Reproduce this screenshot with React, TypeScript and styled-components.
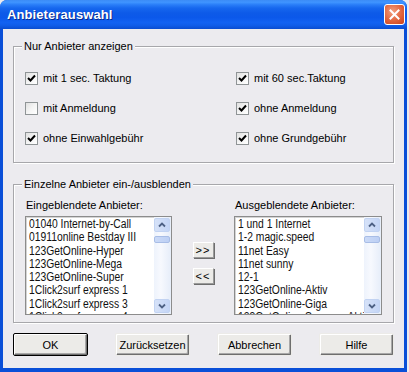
import React from "react";
import styled, { createGlobalStyle } from "styled-components";

const Global = createGlobalStyle`
  html, body { margin: 0; padding: 0; background: #ecebef; }
  body { font-family: "Liberation Sans", Arial, sans-serif; font-size: 11px; color: #000; }
`;

const Window = styled.div`
  width: 407px;
  height: 372px;
  box-sizing: border-box;
  display: flex;
  flex-direction: column;
  background: #0a4fd8;
  border-radius: 7px 7px 0 0;
  overflow: hidden;
`;

const TitleBar = styled.div`
  height: 29px;
  flex: none;
  display: flex;
  align-items: center;
  justify-content: space-between;
  padding: 0 2px 0 7px;
  background: linear-gradient(to bottom, #3c8cf6 0%, #3f94ff 8%, #2a7ef8 16%, #1667ee 28%, #0d5ae8 45%, #0b58ea 60%, #1262f2 78%, #0f5ce8 88%, #0a4cd0 100%);
`;

const Title = styled.span`
  font-family: "Liberation Sans", Arial, sans-serif;
  font-weight: bold;
  font-size: 13px;
  color: #fff;
  text-shadow: 1px 1px 0 #0a2a8c;
  letter-spacing: 0.1px;
`;

const CloseButton = styled.div`
  width: 21px;
  height: 21px;
  box-sizing: border-box;
  border: 1px solid #fff;
  border-radius: 3px;
  background: radial-gradient(circle at 40% 35%, #f3a080 0%, #e2643c 55%, #c8401c 100%);
  display: flex;
  align-items: center;
  justify-content: center;
`;

const Client = styled.div`
  flex: 1;
  margin: 0 3px 4px 3px;
  background: #ecebef;
  padding: 17px 10px 0 10px;
  display: flex;
  flex-direction: column;
`;

const Group = styled.div<{ $gap?: number }>`
  border: 1px solid #a7a7ab;
  box-shadow: inset 1px 1px 0 #fff, 1px 1px 0 #fff;
  margin-top: ${(p) => p.$gap ?? 0}px;
  padding: 0 11px;
`;

const Legend = styled.div`
  margin: -7px 0 0 -3px;
  width: fit-content;
  padding: 0 2px;
  line-height: 13px;
  background: #ecebef;
`;

const CheckGrid = styled.div`
  display: grid;
  grid-template-columns: 211px 1fr;
  grid-auto-rows: 30px;
  margin: 10px 0 9px 0;
`;

const CheckRow = styled.label`
  display: flex;
  align-items: center;
  gap: 5px;
  line-height: 13px;
`;

const Box = styled.span`
  width: 13px;
  height: 13px;
  box-sizing: border-box;
  border: 1px solid #8f9496;
  background: linear-gradient(135deg, #e0e0e0 0%, #f4f4f4 50%, #fff 100%);
  display: flex;
  align-items: center;
  justify-content: center;
`;

const Check = ({ on }: { on: boolean }) => (
  <Box>
    {on && (
      <svg width="9" height="9" viewBox="0 0 9 9">
        <path d="M1 4 L3.5 6.5 L8 1.5" stroke="#000" strokeWidth="2" fill="none" />
      </svg>
    )}
  </Box>
);

const ListArea = styled.div`
  display: grid;
  grid-template-columns: 147px 21px 148px;
  justify-content: space-between;
  margin: 8px 0 7px 0;
`;

const Column = styled.div`
  display: flex;
  flex-direction: column;
`;

const ColLabel = styled.div`
  line-height: 13px;
  margin: 0 0 4px 1px;
`;

const ListBox = styled.div`
  height: 99px;
  box-sizing: border-box;
  border: 1px solid #8c8c8c;
  box-shadow: inset 1px 1px 0 #d4d4d4;
  background: #fff;
  display: flex;
  overflow: hidden;
`;

const Items = styled.div`
  flex: 1;
  min-width: 0;
  padding: 1px 0 0 3px;
  overflow: hidden;
`;

const Item = styled.div`
  font-family: "Liberation Sans", Arial, sans-serif;
  font-size: 12px;
  line-height: 13.3px;
  white-space: nowrap;
  transform: scaleX(0.86);
  transform-origin: left center;
  color: #111;
`;

const ScrollBar = styled.div`
  width: 16px;
  flex: none;
  display: flex;
  flex-direction: column;
  background: linear-gradient(to right, #eef3fc 0%, #f7f9fe 40%, #e6edf9 100%);
  padding: 1px 1px 1px 0;
`;

const ScrollBtn = styled.div`
  height: 14px;
  box-sizing: border-box;
  border: 1px solid #c2d3f2;
  border-radius: 2px;
  background: linear-gradient(to right, #d6e2f8, #c4d5f6);
  display: flex;
  align-items: center;
  justify-content: center;
`;

const Thumb = styled.div`
  height: 7px;
  margin-top: 4px;
  box-sizing: border-box;
  border: 1px solid #a8bde6;
  border-radius: 2px;
  background: linear-gradient(to right, #cbdaf7, #bccff4);
`;

const Track = styled.div`
  flex: 1;
`;

const Arrow = ({ down }: { down?: boolean }) => (
  <svg width="8" height="6" viewBox="0 0 8 6">
    <path d={down ? "M1 1.5 L4 4.5 L7 1.5" : "M1 4.5 L4 1.5 L7 4.5"} stroke="#4d6185" strokeWidth="1.8" fill="none" />
  </svg>
);

const MiddleCol = styled.div`
  display: flex;
  flex-direction: column;
  gap: 10px;
  padding-top: 43px;
`;

const SmallBtn = styled.div`
  width: 21px;
  height: 16px;
  box-sizing: border-box;
  border: 1px solid;
  border-color: #fff #9a9a9a #9a9a9a #fff;
  box-shadow: 1px 1px 0 #6e6e6e;
  background: #ecebe8;
  display: flex;
  align-items: center;
  justify-content: center;
  font-size: 11px;
  line-height: 11px;
  letter-spacing: 1px;
`;

const ButtonRow = styled.div`
  display: flex;
  justify-content: space-between;
  margin-top: 10px;
`;

const Button = styled.div<{ $default?: boolean }>`
  width: 75px;
  height: 23px;
  box-sizing: border-box;
  display: flex;
  align-items: center;
  justify-content: center;
  background: #ecebe8;
  border-radius: 2px;
  border: 1px solid ${(p) => (p.$default ? "#000" : "transparent")};
  box-shadow: inset 1px 1px 0 #fff, inset -1px -1px 0 #6e6e6e, inset -2px -2px 0 #a8a8a8;
  font-size: 11px;
`;

const left = [
  "01040 Internet-by-Call",
  "01911online Bestday III",
  "123GetOnline-Hyper",
  "123GetOnline-Mega",
  "123GetOnline-Super",
  "1Click2surf express 1",
  "1Click2surf express 3",
  "1Click2surf express 4",
];

const right = [
  "1 und 1 Internet",
  "1-2 magic.speed",
  "11net Easy",
  "11net sunny",
  "12-1",
  "123GetOnline-Aktiv",
  "123GetOnline-Giga",
  "123GetOnline-Sommer-Aktiv",
];

const List = ({ items }: { items: string[] }) => (
  <ListBox>
    <Items>
      {items.map((t) => (
        <Item key={t}>{t}</Item>
      ))}
    </Items>
    <ScrollBar>
      <ScrollBtn>
        <Arrow />
      </ScrollBtn>
      <Thumb />
      <Track />
      <ScrollBtn>
        <Arrow down />
      </ScrollBtn>
    </ScrollBar>
  </ListBox>
);

export default function App() {
  return (
    <>
      <Global />
      <Window>
        <TitleBar>
          <Title>Anbieterauswahl</Title>
          <CloseButton>
            <svg width="11" height="11" viewBox="0 0 11 11">
              <path d="M1.5 1.5 L9.5 9.5 M9.5 1.5 L1.5 9.5" stroke="#fff" strokeWidth="2" strokeLinecap="square" />
            </svg>
          </CloseButton>
        </TitleBar>
        <Client>
          <Group>
            <Legend>Nur Anbieter anzeigen</Legend>
            <CheckGrid>
              <CheckRow><Check on />mit 1 sec. Taktung</CheckRow>
              <CheckRow><Check on />mit 60 sec.Taktung</CheckRow>
              <CheckRow><Check on={false} />mit Anmeldung</CheckRow>
              <CheckRow><Check on />ohne Anmeldung</CheckRow>
              <CheckRow><Check on />ohne Einwahlgebühr</CheckRow>
              <CheckRow><Check on />ohne Grundgebühr</CheckRow>
            </CheckGrid>
          </Group>
          <Group $gap={21}>
            <Legend>Einzelne Anbieter ein-/ausblenden</Legend>
            <ListArea>
              <Column>
                <ColLabel>Eingeblendete Anbieter:</ColLabel>
                <List items={left} />
              </Column>
              <MiddleCol>
                <SmallBtn>&gt;&gt;</SmallBtn>
                <SmallBtn>&lt;&lt;</SmallBtn>
              </MiddleCol>
              <Column>
                <ColLabel>Ausgeblendete Anbieter:</ColLabel>
                <List items={right} />
              </Column>
            </ListArea>
          </Group>
          <ButtonRow>
            <Button $default>OK</Button>
            <Button>Zurücksetzen</Button>
            <Button>Abbrechen</Button>
            <Button>Hilfe</Button>
          </ButtonRow>
        </Client>
      </Window>
    </>
  );
}
